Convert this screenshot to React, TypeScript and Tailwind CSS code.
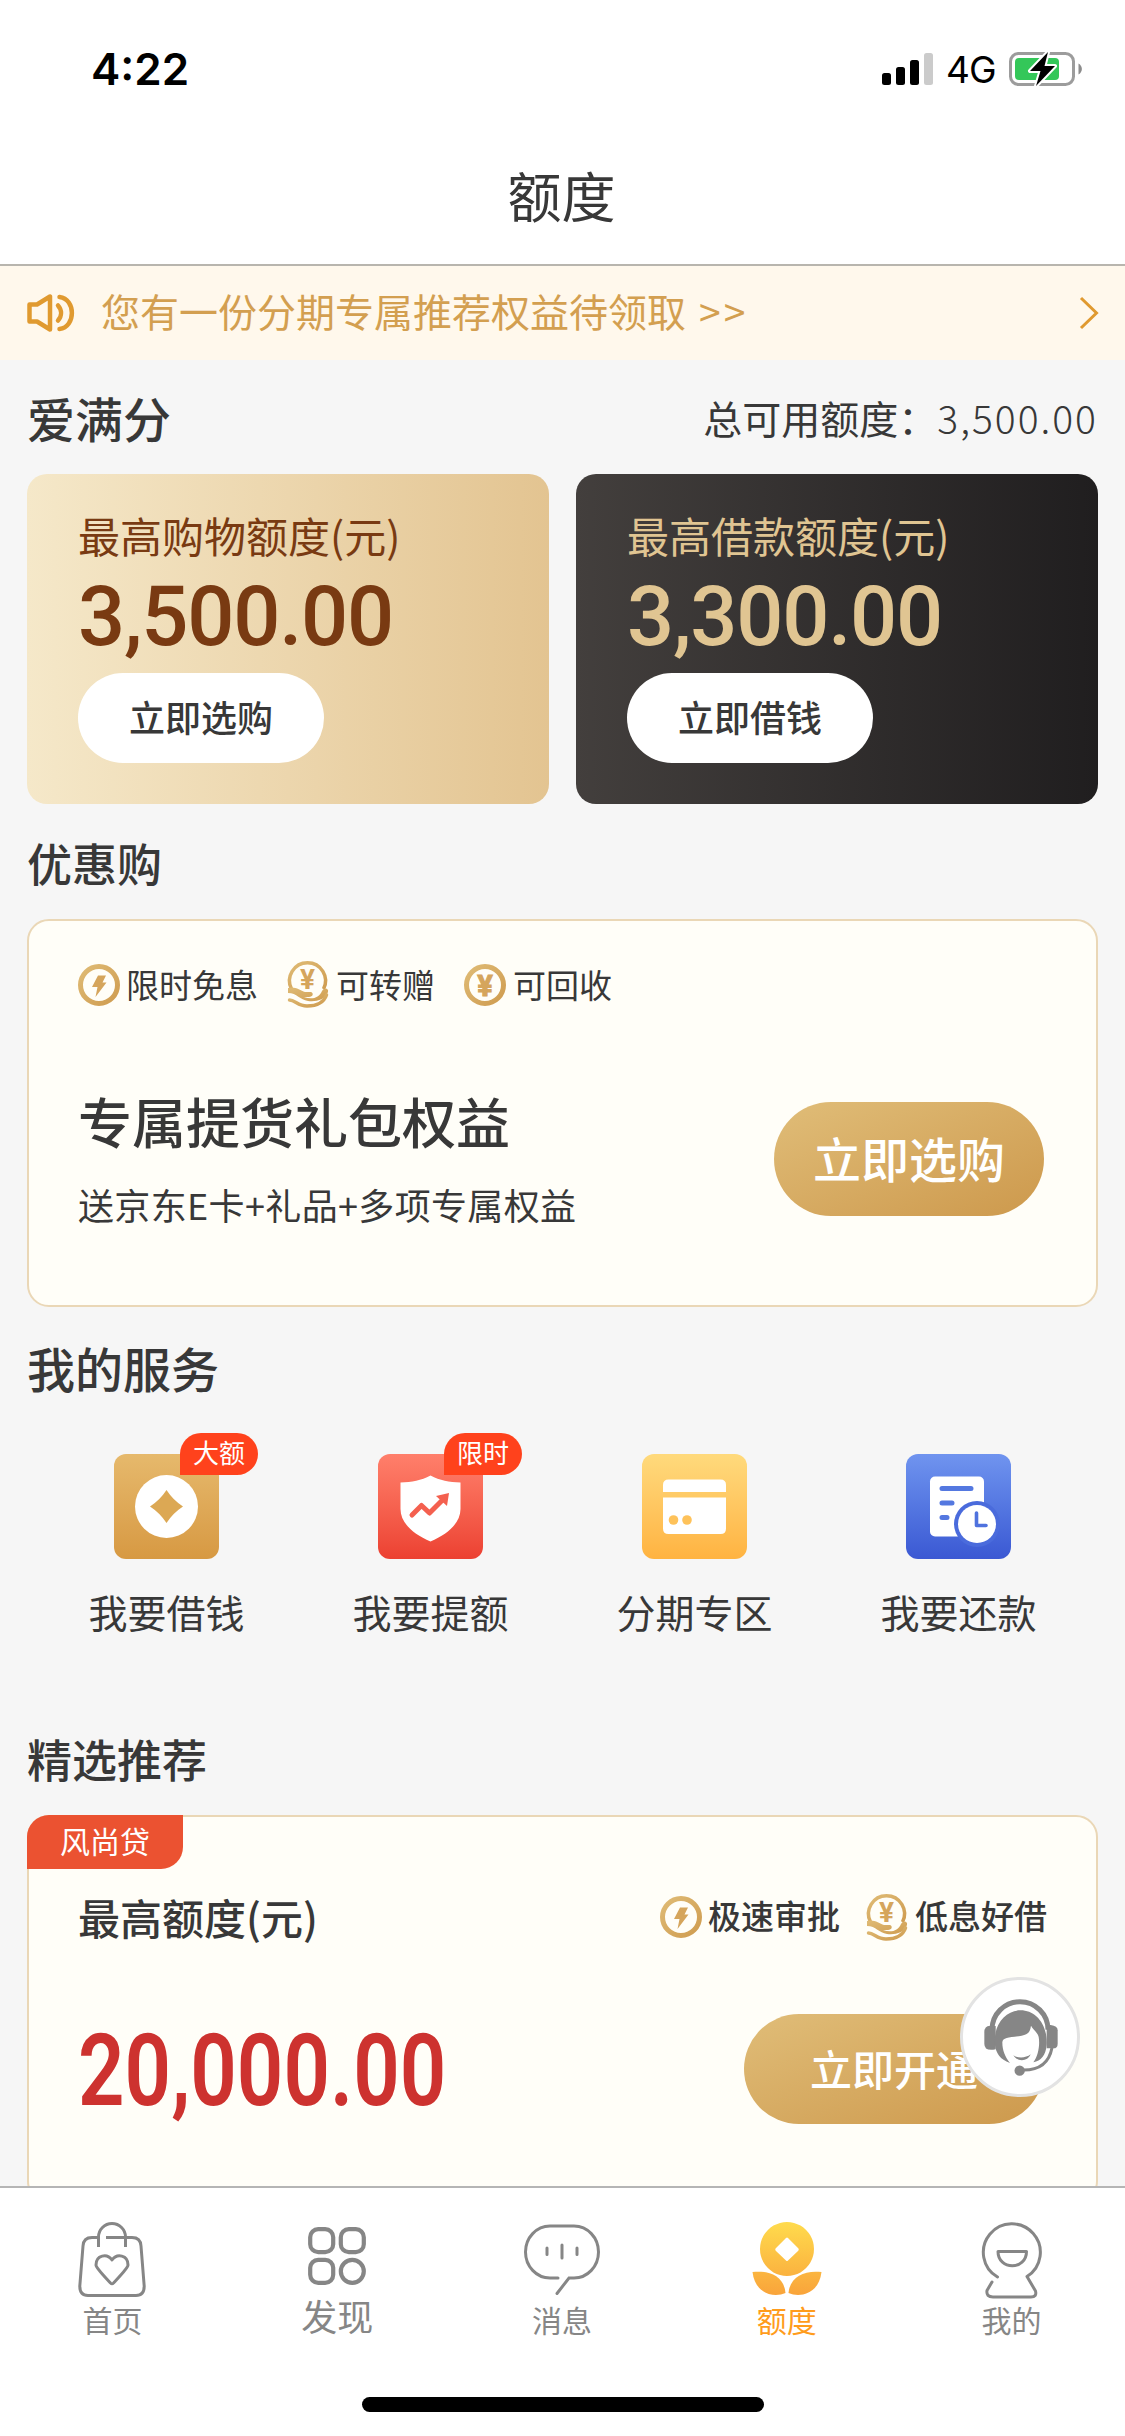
import React from 'react';

interface ServiceItem {
  label: string;
  badge?: string;
  icon: React.ReactNode;
  tile: string;
}

interface TabItem {
  label: string;
  icon: React.ReactNode;
  iconClass: string;
  labelClass: string;
}

const StatusIcons: React.FC = () => (
  <div className="flex items-center text-black">
    <svg width="52" height="33" viewBox="0 0 52 33" className="mr-3">
      <rect x="0" y="20" width="9" height="12" rx="2.5" fill="#000" />
      <rect x="14" y="14" width="9" height="18" rx="2.5" fill="#000" />
      <rect x="28" y="7" width="9" height="25" rx="2.5" fill="#000" />
      <rect x="42" y="0" width="9" height="32" rx="2.5" fill="#cbcbcb" />
    </svg>
    <span className="w-[50px] font-[Inter,sans-serif] text-[37px] leading-none tracking-[-1px]">4G</span>
    <svg width="74" height="36" viewBox="0 0 74 36" className="ml-[13px]">
      <rect x="1.5" y="2.5" width="63" height="31" rx="8" fill="none" stroke="#9c9c9c" strokeWidth="3" />
      <path d="M69.500 12.500V23.500C74 21 74 15 69.500 12.500Z" fill="#8c8c8c" />
      <rect x="6" y="7" width="44" height="22" rx="4" fill="#34c759" />
      <path d="M39 1L21 20H31.500L27 35L46 15H35.500Z" fill="#000" stroke="#fff" strokeWidth="4" paintOrder="stroke" strokeLinejoin="round" />
    </svg>
  </div>
);

const SpeakerIcon: React.FC = () => (
  <svg width="48" height="38" viewBox="0 0 48 38" fill="none" stroke="#e09a30" strokeWidth="4.5" strokeLinejoin="round" strokeLinecap="round">
    <path d="M2.500 10.500H10L23 2.500V35.500L10 27.500H2.500Z" />
    <path d="M31 11.500C35 16 35 22 31 26.500" />
    <path d="M32.500 3C49 5 49 33 32.500 35" />
  </svg>
);

const GoldDefs: React.FC = () => (
  <svg width="0" height="0" className="absolute">
    <defs>
      <linearGradient id="gold" x1="0" y1="0" x2="1" y2="1">
        <stop offset="0" stopColor="#dfbb75" />
        <stop offset="1" stopColor="#cf9c50" />
      </linearGradient>
      <linearGradient id="sun" x1="0" y1="0" x2="0" y2="74" gradientUnits="userSpaceOnUse">
        <stop offset="0" stopColor="#ffdb4d" />
        <stop offset="1" stopColor="#f9a33a" />
      </linearGradient>
    </defs>
  </svg>
);

const FlashCoin: React.FC = () => (
  <svg width="42" height="44" viewBox="0 0 42 44">
    <circle cx="21" cy="22" r="18.500" fill="none" stroke="url(#gold)" strokeWidth="5" />
    <path d="M20 12.500H28L24.500 19.500H28.500L17.500 34L19.500 24H14Z" fill="#d5a55c" />
  </svg>
);

const YuanCoin: React.FC = () => (
  <svg width="42" height="44" viewBox="0 0 42 44" className="overflow-visible">
    <circle cx="21" cy="22" r="18.500" fill="none" stroke="url(#gold)" strokeWidth="5" />
    <text x="21" y="32.500" textAnchor="middle" fill="#d5a55c" stroke="#d5a55c" strokeWidth="1" className="font-[Roboto,sans-serif] text-[29px] font-bold">¥</text>
  </svg>
);

const HandCoin: React.FC = () => (
  <svg width="42" height="50" viewBox="0 0 42 50" className="overflow-visible">
    <path d="M4.500 30A18 18 0 1 1 36.500 30" fill="none" stroke="url(#gold)" strokeWidth="3.500" />
    <text x="20.500" y="30" textAnchor="middle" fill="#d5a55c" className="font-[Roboto,sans-serif] text-[28px] font-bold">¥</text>
    <path d="M1 29C8 27 13 31 18 33H24C27 34 26 38 22 38H17C25 41 32 39 35 32C37 28 42 29 41 33C38 41 29 43 21 42C13 41 10 34 1 34Z" fill="url(#gold)" />
    <path d="M2.500 41C8 41 11 47 20 47C30 47 37 43 39.500 36" fill="none" stroke="url(#gold)" strokeWidth="3.500" strokeLinecap="round" />
  </svg>
);

const LoanIcon: React.FC = () => (
  <svg width="105" height="105" viewBox="0 0 105 105">
    <circle cx="52.500" cy="52.500" r="31.500" fill="#fff" />
    <path d="M52.500 36Q59 46 69 52.500Q59 59 52.500 69Q46 59 36 52.500Q46 46 52.500 36Z" fill="#dca854" />
  </svg>
);

const ShieldIcon: React.FC = () => (
  <svg width="105" height="105" viewBox="0 0 105 105">
    <path d="M52.500 21.500C62 26.500 71 28 82.500 28.500V55C82.500 69 70 80 52.500 87.500C35 80 22.500 69 22.500 55V28.500C34 28 43 26.500 52.500 21.500Z" fill="#fff" />
    <path d="M34 61L43.500 51.500L51.500 59L65 45.500" fill="none" stroke="#f4604f" strokeWidth="5" strokeLinecap="round" strokeLinejoin="round" />
    <path d="M58 42L71 39L69 52Z" fill="#f4604f" />
  </svg>
);

const CardIcon: React.FC = () => (
  <svg width="105" height="105" viewBox="0 0 105 105">
    <path d="M21 38V31Q21 25.500 26.500 25.500H78.500Q84 25.500 84 31V38Z" fill="#fff" />
    <path d="M21 43.500H84V74.500Q84 80 78.500 80H26.500Q21 80 21 74.500Z" fill="#fff" />
    <circle cx="31.500" cy="66" r="4.800" fill="#fec25a" />
    <circle cx="45" cy="66" r="4.800" fill="#fec25a" />
  </svg>
);

const RepayIcon: React.FC = () => (
  <svg width="105" height="105" viewBox="0 0 105 105">
    <rect x="24" y="22.500" width="54" height="60" rx="5" fill="#fff" />
    <path d="M36 34.500H65M36 49H46M36 63.500H41" stroke="#5478e0" strokeWidth="5" strokeLinecap="round" />
    <circle cx="71" cy="70" r="23" fill="#4a6bdc" />
    <circle cx="71" cy="70" r="19" fill="#fff" />
    <path d="M70.500 59V71.500H80" fill="none" stroke="#4f72de" strokeWidth="3.600" strokeLinecap="round" strokeLinejoin="round" />
  </svg>
);

const HeadsetIcon: React.FC = () => (
  <svg width="114" height="114" viewBox="9 9 342 342">
    <path d="M96 158A84 84 0 0 1 264 158" fill="none" stroke="#868686" strokeWidth="15" />
    <path d="M107 147V217Q73 224 73 200V166Q73 146 90 146Z" fill="#868686" />
    <path d="M260 144H272Q293 147 293 160V200Q293 214 280 214H260Z" fill="#868686" />
    <path d="M105 205C98 140 140 100 182 100C225 100 264 140 260 205C257 235 243 252 220 256C236 235 240 200 236 180C232 165 218 156 213 146C210 165 205 172 185 176C150 182 128 180 127 196C127 222 136 240 150 258C120 248 108 228 105 205Z" fill="#868686" />
    <path d="M160 235C172 244 198 244 212 232C204 254 172 256 160 235Z" fill="#868686" />
    <circle cx="179" cy="281" r="15.500" fill="#868686" />
    <path d="M188 279C240 280 268 254 276 212" fill="none" stroke="#868686" strokeWidth="9" />
  </svg>
);

const BagIcon: React.FC = () => (
  <svg width="68" height="78" viewBox="0 -1 68 78" fill="none" stroke="#868686" strokeWidth="3" strokeLinecap="butt" strokeLinejoin="round">
    <path d="M20.500 15.500H14Q5.500 15.500 5 24L1.800 64Q1.800 73.500 10 73.500H58Q66.200 73.500 66.200 64L63 24Q62.500 15.500 54 15.500H28" />
    <path d="M20.500 25V15A13.500 13.500 0 0 1 47.500 15V25" />
    <path d="M34 38C29 31 18 33 18 43C18 46 27 55 32.500 61Q34 62.500 35.500 61C41 55 50 46 50 43C50 33 39 31 34 38Z" />
  </svg>
);

const GridIcon: React.FC = () => (
  <svg width="58" height="58" viewBox="0 0 58 58" fill="none" stroke="#868686" strokeWidth="4.2">
    <rect x="2.200" y="2.200" width="23" height="23" rx="8" />
    <rect x="32.800" y="2.200" width="23" height="23" rx="8" />
    <rect x="2.200" y="32.800" width="23" height="23" rx="8" />
    <circle cx="44.300" cy="44.300" r="11.500" />
  </svg>
);

const ChatIcon: React.FC = () => (
  <svg width="76" height="72" viewBox="0 0 76 72" fill="none" stroke="#868686" strokeWidth="3" strokeLinecap="round">
    <path d="M34 54H26A24.500 26 0 0 1 26 2H50A24.500 26 0 0 1 50 54H45L33 69.500" />
    <path d="M23 24V30.500M38 21V34M53 24V30.500" />
  </svg>
);

const QuotaIcon: React.FC = () => (
  <svg width="70" height="76" viewBox="0 0 70 76">
    <path d="M35 0A27 27 0 1 1 34.990 0ZM34 16L24 26Q22.500 27.500 24 29L34 38.500Q35 39.500 36 38.500L46 29Q47.500 27.500 46 26L36 16Q35 15 34 16Z" fill="url(#sun)" fillRule="evenodd" />
    <path d="M0.500 50C17 48 32 54 33.500 71C22 76 3 72 0.500 50Z" fill="url(#sun)" />
    <path d="M69.500 50C53 48 38 54 36.500 71C48 76 67 72 69.500 50Z" fill="url(#sun)" />
  </svg>
);

const ProfileIcon: React.FC = () => (
  <svg width="62" height="77" viewBox="0 0 62 77" fill="none" stroke="#868686" strokeWidth="3" strokeLinecap="round" strokeLinejoin="round" className="overflow-visible">
    <path d="M16.500 55A28.500 28.500 0 1 1 46 54.500L54.500 69Q56 75 50 75H12Q5 75 6 68.500L11 60" />
    <path d="M17 29.500H45.500C45.500 48.500 17 48.500 17 29.500Z" />
  </svg>
);

const services: ServiceItem[] = [
  { label: '我要借钱', badge: '大额', icon: <LoanIcon />, tile: 'from-[#e6b96c] to-[#d79942]' },
  { label: '我要提额', badge: '限时', icon: <ShieldIcon />, tile: 'from-[#ff7f6b] to-[#ec4031]' },
  { label: '分期专区', icon: <CardIcon />, tile: 'from-[#ffda7c] to-[#ffb340]' },
  { label: '我要还款', icon: <RepayIcon />, tile: 'from-[#7094ef] to-[#3b58d3]' },
];

const tabs: TabItem[] = [
  { label: '首页', icon: <BagIcon />, iconClass: '', labelClass: 'text-[30px] text-[#868686]' },
  { label: '发现', icon: <GridIcon />, iconClass: 'pb-2', labelClass: 'text-[36px] text-[#868686] -mt-1' },
  { label: '消息', icon: <ChatIcon />, iconClass: '', labelClass: 'text-[30px] text-[#868686]' },
  { label: '额度', icon: <QuotaIcon />, iconClass: '', labelClass: 'text-[30px] text-[#ff9c1c]' },
  { label: '我的', icon: <ProfileIcon />, iconClass: '', labelClass: 'text-[30px] text-[#868686]' },
];

const App: React.FC = () => {
  return (
    <div className="relative flex h-[2436px] w-[1125px] flex-col overflow-hidden bg-[#f6f6f6] font-['Noto_Sans_CJK_SC',sans-serif] text-[#383838]">
      <GoldDefs />

      <header className="h-[264px] shrink-0 bg-white">
        <div className="flex h-[138px] items-center justify-between pl-[91px] pr-[42px]">
          <span className="font-[Inter,sans-serif] text-[44px] font-semibold leading-none text-black">4:22</span>
          <StatusIcons />
        </div>
        <h1 className="flex h-[126px] items-center justify-center pb-[12px] pr-[2px] text-[54px] leading-none">额度</h1>
      </header>

      <div className="flex h-24 shrink-0 items-center border-t-2 border-[#b8b5ae] bg-[#fff8ec] pl-[27px] pr-[26px]">
        <SpeakerIcon />
        <p className="ml-[26px] flex-1 pb-[5px] text-[39px] leading-none text-[#d39f50]">
          您有一份分期专属推荐权益待领取<span className="ml-[13px] tracking-[3px]">&gt;&gt;</span>
        </p>
        <svg width="20" height="34" viewBox="0 0 20 34" fill="none" stroke="#e09a30" strokeWidth="3">
          <path d="M2 2L17.500 17L2 32" />
        </svg>
      </div>

      <main className="min-h-0 flex-1 overflow-hidden px-[27px]">
        <div className="flex h-[114px] items-center justify-between">
          <h2 className="text-[48px] font-medium leading-none">爱满分</h2>
          <p className="text-[39px] leading-none">
            总可用额度：<span className="font-light tracking-[2px]">3,500.00</span>
          </p>
        </div>

        <div className="grid grid-cols-2 gap-[27px]">
          <div className="h-[330px] rounded-[20px] bg-gradient-to-r from-[#f5e8c9] to-[#e3c491] pl-[51px] pt-[31px] text-[#793a12]">
            <p className="text-[42px] leading-[60px]">最高购物额度(元)</p>
            <p className="mt-[10px] font-[Roboto,sans-serif] text-[83px] font-medium leading-[84px] tracking-[-1.2px]">3,500.00</p>
            <button className="mt-[14px] flex h-[90px] w-[246px] items-center justify-center rounded-full bg-white pb-1 text-[36px] font-medium leading-none text-[#383838]">
              立即选购
            </button>
          </div>
          <div className="h-[330px] rounded-[20px] bg-gradient-to-r from-[#433f3d] to-[#201e1f] pl-[51px] pt-[31px] text-[#e0c592]">
            <p className="text-[42px] leading-[60px]">最高借款额度(元)</p>
            <p className="mt-[10px] font-[Roboto,sans-serif] text-[83px] font-medium leading-[84px] tracking-[-1.2px]">3,300.00</p>
            <button className="mt-[14px] flex h-[90px] w-[246px] items-center justify-center rounded-full bg-white pb-1 text-[36px] font-medium leading-none text-[#383838]">
              立即借钱
            </button>
          </div>
        </div>

        <h2 className="flex h-[115px] items-center pt-[2px] text-[45px] font-medium leading-none">优惠购</h2>
        <section className="h-[388px] rounded-[22px] border-2 border-[#ead7b6] bg-[#fffef8] pl-[49px] pr-[52px] pt-[39px]">
          <div className="flex h-[50px] items-center text-[33px] leading-none">
            <FlashCoin />
            <span className="ml-[6px] pb-[2px]">限时免息</span>
            <span className="-mt-[2px] ml-[29px]"><HandCoin /></span>
            <span className="ml-[7px] pb-[2px]">可转赠</span>
            <span className="ml-[29px]"><YuanCoin /></span>
            <span className="ml-[7px] pb-[2px]">可回收</span>
          </div>
          <div className="mt-[71px] flex items-center justify-between">
            <div>
              <h3 className="text-[54px] font-medium leading-[80px]">专属提货礼包权益</h3>
              <p className="mt-[13px] text-[36px] leading-[60px] tracking-[0.35px]">送京东E卡+礼品+多项专属权益</p>
            </div>
            <button className="mt-[3px] flex h-[114px] w-[270px] items-center justify-center rounded-full bg-gradient-to-br from-[#e0bd78] to-[#cd994c] pb-1 text-[48px] font-medium leading-none text-white">
              立即选购
            </button>
          </div>
        </section>

        <h2 className="flex h-[118px] items-center pt-[2px] text-[48px] font-medium leading-none">我的服务</h2>
        <div className="grid h-[275px] grid-cols-4 px-[7.5px] pt-[29px]">
          {services.map((service) => (
            <div key={service.label} className="flex flex-col items-center">
              <div className={`relative h-[105px] w-[105px] rounded-[12px] bg-gradient-to-b ${service.tile}`}>
                {service.icon}
                {service.badge && (
                  <span className="absolute left-[66px] top-[-21px] flex h-[42px] w-[78px] items-center justify-center rounded-[21px] rounded-bl-none bg-[#ff421c] pb-[4px] text-[26px] leading-none text-white">
                    {service.badge}
                  </span>
                )}
              </div>
              <span className="mt-[22px] text-[39px] leading-[60px]">{service.label}</span>
            </div>
          ))}
        </div>

        <h2 className="flex h-[115px] items-center pt-[2px] text-[45px] font-medium leading-none">精选推荐</h2>
        <section className="h-[388px] rounded-[22px] border-2 border-[#ead7b6] bg-[#fffef8]">
          <div className="-ml-[2px] -mt-[2px] flex h-[54px] w-[156px] items-center justify-center rounded-br-[22px] rounded-tl-[22px] bg-[#eb5231] pb-[4px] text-[30px] leading-none text-white">
            风尚贷
          </div>
          <div className="mt-[18px] flex h-[60px] items-center justify-between pl-[49px] pr-[49px]">
            <span className="text-[42px] font-medium leading-none">最高额度(元)</span>
            <div className="flex items-center text-[33px] font-medium leading-none">
              <FlashCoin />
              <span className="ml-[6px] pb-[3px]">极速审批</span>
              <span className="ml-[26px]"><HandCoin /></span>
              <span className="ml-[7px] pb-[3px]">低息好借</span>
            </div>
          </div>
          <div className="mt-[67px] flex h-[110px] items-center justify-between pl-[49px] pr-[52px]">
            <span className="origin-left scale-x-[0.807] pt-[3px] font-[Roboto,sans-serif] text-[101px] font-semibold leading-none text-[#cd322f]">20,000.00</span>
            <button className="flex h-[110px] w-[300px] shrink-0 items-center justify-center rounded-full bg-gradient-to-br from-[#e0bd78] to-[#cd994c] pb-[3px] text-[42px] font-medium leading-none text-white">
              立即开通
            </button>
          </div>
        </section>
      </main>

      {/* customer service */}
      <button className="absolute left-[960px] top-[1977px] flex h-[120px] w-[120px] items-center justify-center rounded-full border-[3px] border-[#e3e3e3] bg-white">
        <HeadsetIcon />
      </button>

      <nav className="flex h-[250px] shrink-0 flex-col items-center border-t-2 border-[#b5b5b5] bg-white">
        <div className="grid w-full grid-cols-5 pr-[1px] pt-[33px]">
          {tabs.map((tab) => (
            <div key={tab.label} className="flex flex-col items-center">
              <div className={`flex h-[78px] items-center justify-center ${tab.iconClass}`}>{tab.icon}</div>
              <span className={`leading-[40px] ${tab.labelClass}`}>{tab.label}</span>
            </div>
          ))}
        </div>
        <div className="mb-6 mt-auto h-[15px] w-[402px] rounded-full bg-black" />
      </nav>
    </div>
  );
};

export default App;
